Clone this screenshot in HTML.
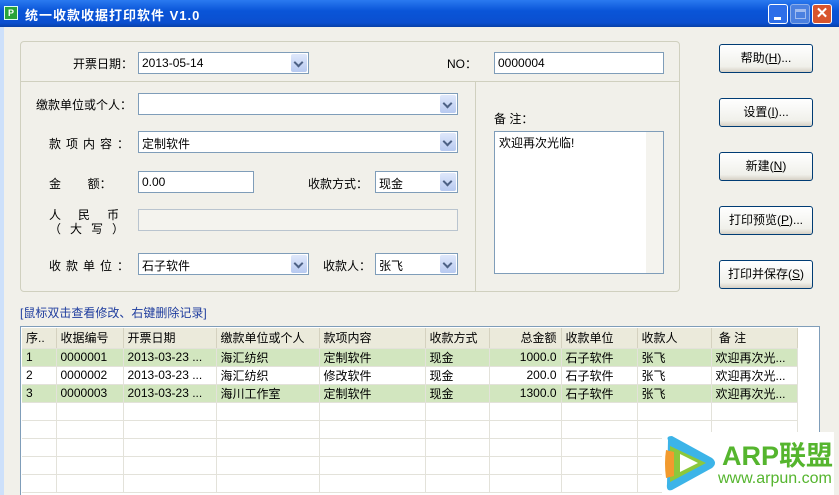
<!DOCTYPE html>
<html><head><meta charset="utf-8">
<style>
*{box-sizing:border-box;margin:0;padding:0}
body{width:839px;height:495px;overflow:hidden;background:#f1f0ea;font-family:"Liberation Sans","Noto Sans CJK SC","WenQuanYi Zen Hei",sans-serif;font-size:12px;color:#000;position:relative}
.a{position:absolute;white-space:nowrap}
.title{left:0;top:0;width:839px;height:27px;background:linear-gradient(#2a7af0,#0a55d8 40%,#0b4fcf 85%,#0840a8);}
.inp{position:absolute;background:#fff;border:1px solid #7f9db9;height:22px;padding:3px 3px;font-size:12px}
.dd{position:absolute;right:1px;top:1px;width:16px;height:18px;background:linear-gradient(#dfe8fb,#b7c9f0);border-radius:2px}
.dd:after{content:"";position:absolute;left:4px;top:5px;width:5px;height:5px;border-right:2px solid #4d6185;border-bottom:2px solid #4d6185;transform:rotate(45deg)}
.btn{position:absolute;left:719px;width:94px;height:29px;border:1px solid #003c74;border-radius:3px;background:linear-gradient(#fff,#f0f0ea 80%,#d6d0c5);text-align:center;line-height:27px;font-size:12px}
.lbl{position:absolute;font-size:12px}
table{border-collapse:collapse;font-size:12px}
td{height:18px;border-right:1px solid #e3e2da;border-bottom:1px solid #e3e2da;padding:0 4px;white-space:nowrap;overflow:hidden}
tr.g td{background:#d2e6bf}
tr.h td{background:#ebeadb;border-right:1px solid #d5d2c0;height:20px}
.r{text-align:right}
</style></head><body>
<div class="a" style="left:0;top:27px;width:4px;height:468px;background:#cde0fa"></div>
<div class="a title"></div>
<div class="a" style="left:4px;top:6px;width:14px;height:14px;background:#2aa33a;border:1px solid #dfe;color:#fff;font-size:9px;font-weight:bold;text-align:center;line-height:12px">P</div>
<div class="a" style="left:25px;top:5px;color:#fff;font-size:13px;font-weight:bold;letter-spacing:1px">统一收款收据打印软件 V1.0</div>
<div class="a" style="left:768px;top:4px;width:20px;height:20px;border:1px solid #fff;border-radius:3px;background:#2d6ee8"><div style="position:absolute;left:5px;top:12px;width:7px;height:3px;background:#fff"></div></div>
<div class="a" style="left:790px;top:4px;width:20px;height:20px;border:1px solid #8fb0ea;border-radius:3px;background:#4a80e0"><div style="position:absolute;left:4px;top:4px;width:11px;height:10px;border:1px solid #9fbbef;border-top-width:3px"></div></div>
<div class="a" style="left:812px;top:4px;width:20px;height:20px;border:1px solid #fff;border-radius:3px;background:#d8552d;color:#fff;font-weight:bold;font-size:15px;text-align:center;line-height:18px">✕</div>

<div class="a" style="left:20px;top:41px;width:660px;height:251px;border:1px solid #d0d0bf;border-radius:4px"></div>
<div class="a" style="left:20px;top:81px;width:660px;height:1px;background:#d0d0bf"></div>
<div class="a" style="left:475px;top:81px;width:1px;height:211px;background:#d0d0bf"></div>

<div class="lbl" style="left:73px;top:55px">开票日期：</div>
<div class="inp" style="left:138px;top:52px;width:171px">2013-05-14<div class="dd"></div></div>
<div class="lbl" style="left:447px;top:55px">NO：</div>
<div class="inp" style="left:494px;top:52px;width:170px">0000004</div>

<div class="lbl" style="left:36px;top:96px">缴款单位或个人：</div>
<div class="inp" style="left:138px;top:93px;width:320px"><div class="dd"></div></div>
<div class="lbl" style="left:49px;top:135px;letter-spacing:5px">款项内容：</div>
<div class="inp" style="left:138px;top:131px;width:320px">定制软件<div class="dd"></div></div>
<div class="lbl" style="left:49px;top:175px;word-spacing:0">金&nbsp;&nbsp;&nbsp;&nbsp;&nbsp;&nbsp;&nbsp;&nbsp;额：</div>
<div class="inp" style="left:138px;top:171px;width:116px">0.00</div>
<div class="lbl" style="left:308px;top:175px">收款方式：</div>
<div class="inp" style="left:375px;top:171px;width:83px">现金<div class="dd"></div></div>
<div class="lbl" style="left:49px;top:206px;letter-spacing:17px">人民币</div>
<div class="lbl" style="left:49px;top:220px;letter-spacing:9px">（大写）</div>
<div class="inp" style="left:138px;top:209px;width:320px;background:#f4f3ee;border-color:#b9c4cf"></div>
<div class="lbl" style="left:49px;top:257px;letter-spacing:5px">收款单位：</div>
<div class="inp" style="left:138px;top:253px;width:171px">石子软件<div class="dd"></div></div>
<div class="lbl" style="left:323px;top:257px">收款人：</div>
<div class="inp" style="left:375px;top:253px;width:83px">张飞<div class="dd"></div></div>

<div class="lbl" style="left:494px;top:110px">备 注：</div>
<div class="inp" style="left:494px;top:131px;width:170px;height:143px;padding:2px 4px">欢迎再次光临!
<div style="position:absolute;right:0;top:0;width:17px;height:141px;background:#f4f3ee"></div></div>

<div class="btn" style="top:44px">帮助(<u>H</u>)...</div>
<div class="btn" style="top:98px">设置(<u>I</u>)...</div>
<div class="btn" style="top:152px">新建(<u>N</u>)</div>
<div class="btn" style="top:206px">打印预览(<u>P</u>)...</div>
<div class="btn" style="top:260px">打印并保存(<u>S</u>)</div>

<div class="lbl" style="left:20px;top:304px;color:#1f3d9e">[鼠标双击查看修改、右键删除记录]</div>

<div class="a" style="left:20px;top:326px;width:800px;height:169px;border:1px solid #7f9db9;border-bottom:none;background:#fff;overflow:hidden;padding:1px">
<table style="width:775px;table-layout:fixed">
<colgroup><col style="width:34px"><col style="width:67px"><col style="width:93px"><col style="width:103px"><col style="width:106px"><col style="width:64px"><col style="width:72px"><col style="width:76px"><col style="width:74px"><col style="width:86px"></colgroup>
<tr class="h"><td>序..</td><td>收据编号</td><td>开票日期</td><td>缴款单位或个人</td><td>款项内容</td><td>收款方式</td><td class="r">总金额</td><td>收款单位</td><td>收款人</td><td>&nbsp;备&nbsp;注</td></tr>
<tr class="g"><td>1</td><td>0000001</td><td>2013-03-23 ...</td><td>海汇纺织</td><td>定制软件</td><td>现金</td><td class="r">1000.0</td><td>石子软件</td><td>张飞</td><td>欢迎再次光...</td></tr>
<tr><td>2</td><td>0000002</td><td>2013-03-23 ...</td><td>海汇纺织</td><td>修改软件</td><td>现金</td><td class="r">200.0</td><td>石子软件</td><td>张飞</td><td>欢迎再次光...</td></tr>
<tr class="g"><td>3</td><td>0000003</td><td>2013-03-23 ...</td><td>海川工作室</td><td>定制软件</td><td>现金</td><td class="r">1300.0</td><td>石子软件</td><td>张飞</td><td>欢迎再次光...</td></tr>
<tr><td></td><td></td><td></td><td></td><td></td><td></td><td></td><td></td><td></td><td></td></tr>
<tr><td></td><td></td><td></td><td></td><td></td><td></td><td></td><td></td><td></td><td></td></tr>
<tr><td></td><td></td><td></td><td></td><td></td><td></td><td></td><td></td><td></td><td></td></tr>
<tr><td></td><td></td><td></td><td></td><td></td><td></td><td></td><td></td><td></td><td></td></tr>
<tr><td></td><td></td><td></td><td></td><td></td><td></td><td></td><td></td><td></td><td></td></tr>
</table>
</div>
<div class="a" style="left:662px;top:432px;width:172px;height:63px;background:#fff"></div>
<svg class="a" style="left:662px;top:432px" width="60" height="62" viewBox="0 0 60 62">
<path d="M6 8 Q4 4 10 4 L50 26 Q56 31 50 36 L10 58 Q4 60 5 52 Z" fill="#3cb4e8"/>
<path d="M8 14 L44 31 L8 50 Z" fill="#8cc83c"/>
<path d="M4 18 Q2 31 4 46 L12 44 L12 20 Z" fill="#f29a2e"/>
<path d="M18 22 L36 31 L18 40 Z" fill="#fff"/>
</svg>
<div class="a" style="left:722px;top:434px;color:#55b52e;font-size:27px;font-weight:bold">ARP联盟</div>
<div class="a" style="left:718px;top:470px;color:#55b52e;font-size:16px">www.arpun.com</div>
</body></html>
